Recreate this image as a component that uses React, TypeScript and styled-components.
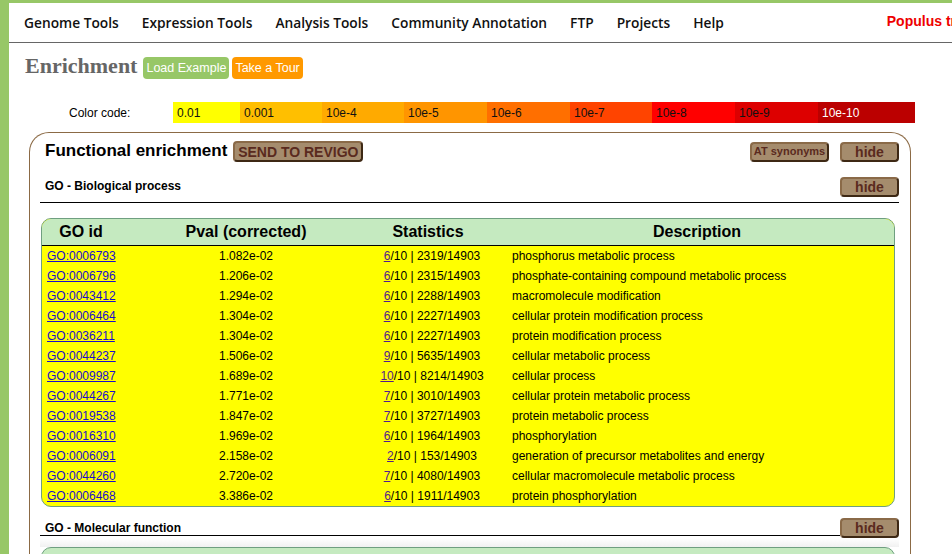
import React from "react";
import styled, { createGlobalStyle } from "styled-components";

const Global = createGlobalStyle`
  html, body { margin: 0; padding: 0; background: #fff; overflow: hidden; }
  body { font-family: "Liberation Sans", Arial, sans-serif; }
`;

const Page = styled.div`
  border-top: 3px solid #97c767;
  border-left: 9px solid #97c767;
  min-height: 600px;
  width: 1100px;
`;

const Nav = styled.nav`
  height: 39px;
  border-bottom: 1px solid #666;
  display: flex;
  align-items: center;
  padding-left: 15px;
  gap: 23px;
  white-space: nowrap;
  font-family: "Open Sans", sans-serif;
  font-weight: 600;
  font-size: 13.75px;
  color: #111;
`;

const NavItem = styled.span``;

const Species = styled.span`
  margin-left: 140px;
  color: #ee0000;
  font-family: "Liberation Sans", Arial, sans-serif;
  font-weight: bold;
  font-size: 14px;
  margin-top: -3px;
`;

const TitleRow = styled.div`
  display: flex;
  align-items: center;
  margin-top: 14px;
  padding-left: 16px;
  height: 22px;
`;

const PageTitle = styled.h1`
  margin: 0 6px 0 0;
  font-family: "Liberation Serif", Georgia, serif;
  font-weight: bold;
  font-size: 22px;
  color: #666;
  line-height: 22px;
  margin-top: -4px;
`;

const Pill = styled.span<{ $bg: string }>`
  background: ${(p) => p.$bg};
  color: #fff;
  font-size: 12.5px;
  height: 22px;
  line-height: 22px;
  padding: 0 3px;
  border-radius: 4px;
  margin-right: 3px;
`;

const ColorRow = styled.div`
  display: flex;
  margin-top: 23px;
  height: 21px;
  font-size: 12px;
  align-items: stretch;
`;

const ColorLabel = styled.div`
  width: 104px;
  margin-left: 60px;
  display: flex;
  align-items: center;
`;

const ColorCell = styled.div<{ $bg: string; $w: number; $light?: boolean }>`
  width: ${(p) => p.$w}px;
  background: ${(p) => p.$bg};
  color: ${(p) => (p.$light ? "#fff" : "#111")};
  padding-left: 4px;
  box-sizing: border-box;
  display: flex;
  align-items: center;
`;

const Panel = styled.section`
  margin: 9px 0 0 20px;
  width: 882px;
  box-sizing: border-box;
  border: 1px solid #8b6a45;
  border-bottom: none;
  border-radius: 20px 20px 0 0;
  padding: 8px 11px 0 10px;
  height: 460px;
`;

const PanelHead = styled.div`
  display: flex;
  align-items: center;
  padding-left: 5px;
  height: 21px;
`;

const PanelTitle = styled.h2`
  margin: -2px 6px 0 0;
  font-size: 17px;
  font-weight: bold;
  color: #000;
`;

const Spacer = styled.div`
  flex: 1;
`;

const BrownButton = styled.button<{ $w: number; $fs: number; $h?: number; $gap?: number }>`
  width: ${(p) => p.$w}px;
  height: ${(p) => p.$h ?? 20}px;
  box-sizing: border-box;
  background: #a58c6d;
  border: 2px solid;
  border-color: #8a6a48 #3d2814 #3d2814 #8a6a48;
  border-radius: 4px;
  color: #5a2a1e;
  font-family: "Liberation Sans", Arial, sans-serif;
  font-weight: bold;
  font-size: ${(p) => p.$fs}px;
  padding: 0;
  line-height: 1;
  margin-left: ${(p) => p.$gap ?? 0}px;
`;

const SectionHead = styled.div<{ $inline?: boolean }>`
  display: flex;
  align-items: center;
  margin-top: ${(p) => (p.$inline ? 11 : 15)}px;
  padding-bottom: ${(p) => (p.$inline ? 0 : 5)}px;
  border-bottom: ${(p) => (p.$inline ? "none" : "1px solid #000")};
`;

const SectionTitle = styled.div<{ $inline?: boolean }>`
  flex: 1;
  font-size: 12px;
  font-weight: bold;
  padding-left: 5px;
  padding-bottom: ${(p) => (p.$inline ? 0 : 0)}px;
  margin-top: ${(p) => (p.$inline ? 1 : -3)}px;
  border-bottom: ${(p) => (p.$inline ? "1px solid #000" : "none")};
`;

const Table = styled.div`
  margin: 15px 4px 0 1px;
  border: 1px solid #6f9f80;
  border-radius: 10px;
  overflow: hidden;
  background: #ffff00;
`;

const HeadRow = styled.div`
  display: grid;
  grid-template-columns: 78px 252px 112px 1fr;
  height: 26px;
  background: #c5eac0;
  border-bottom: 1px solid #000;
  align-items: center;
  font-size: 16px;
  font-weight: bold;
`;

const HeadCell = styled.div<{ $pad?: number }>`
  text-align: center;
  padding-left: ${(p) => p.$pad ?? 0}px;
`;

const Row = styled.div`
  display: grid;
  grid-template-columns: 78px 252px 112px 1fr;
  height: 20px;
  align-items: center;
  font-size: 12px;
  color: #000;
`;

const Cell = styled.div<{ $align?: string; $pad?: number }>`
  text-align: ${(p) => p.$align ?? "center"};
  padding-left: ${(p) => p.$pad ?? 0}px;
  white-space: nowrap;
`;

const GoLink = styled.a`
  color: #1a0dcc;
  text-decoration: underline;
`;

const CountLink = styled.a`
  color: #551a8b;
  text-decoration: underline;
`;

const Shade = styled.div`
  height: 9px;
  background: linear-gradient(#fff, #f1f1f1);
`;

const NextTable = styled.div`
  margin: 0 4px 0 1px;
  height: 40px;
  border: 1px solid #6f9f80;
  border-radius: 10px 10px 0 0;
  background: #c5eac0;
`;

const rows: [string, string, string, string, string][] = [
  ["GO:0006793", "1.082e-02", "6", "2319", "phosphorus metabolic process"],
  ["GO:0006796", "1.206e-02", "6", "2315", "phosphate-containing compound metabolic process"],
  ["GO:0043412", "1.294e-02", "6", "2288", "macromolecule modification"],
  ["GO:0006464", "1.304e-02", "6", "2227", "cellular protein modification process"],
  ["GO:0036211", "1.304e-02", "6", "2227", "protein modification process"],
  ["GO:0044237", "1.506e-02", "9", "5635", "cellular metabolic process"],
  ["GO:0009987", "1.689e-02", "10", "8214", "cellular process"],
  ["GO:0044267", "1.771e-02", "7", "3010", "cellular protein metabolic process"],
  ["GO:0019538", "1.847e-02", "7", "3727", "protein metabolic process"],
  ["GO:0016310", "1.969e-02", "6", "1964", "phosphorylation"],
  ["GO:0006091", "2.158e-02", "2", "153", "generation of precursor metabolites and energy"],
  ["GO:0044260", "2.720e-02", "7", "4080", "cellular macromolecule metabolic process"],
  ["GO:0006468", "3.386e-02", "6", "1911", "protein phosphorylation"],
];

const colors: [string, string, number, boolean?][] = [
  ["0.01", "#ffff00", 67],
  ["0.001", "#ffbf00", 82],
  ["10e-4", "#ffaa00", 82],
  ["10e-5", "#ff9500", 83],
  ["10e-6", "#ff6f00", 83],
  ["10e-7", "#ff4400", 82],
  ["10e-8", "#ff0000", 83],
  ["10e-9", "#dd0000", 83],
  ["10e-10", "#bb0000", 97, true],
];

const navItems = ["Genome Tools", "Expression Tools", "Analysis Tools", "Community Annotation", "FTP", "Projects", "Help"];

export default function App() {
  return (
    <>
      <Global />
      <Page>
        <Nav>
          {navItems.map((n) => (
            <NavItem key={n}>{n}</NavItem>
          ))}
          <Species>Populus trichocarpa</Species>
        </Nav>
        <TitleRow>
          <PageTitle>Enrichment</PageTitle>
          <Pill $bg="#97c767">Load Example</Pill>
          <Pill $bg="#ff9900">Take a Tour</Pill>
        </TitleRow>
        <ColorRow>
          <ColorLabel>Color code:</ColorLabel>
          {colors.map(([label, bg, w, light]) => (
            <ColorCell key={label} $bg={bg} $w={w} $light={light}>
              {label}
            </ColorCell>
          ))}
        </ColorRow>
        <Panel>
          <PanelHead>
            <PanelTitle>Functional enrichment</PanelTitle>
            <BrownButton $w={130} $fs={14} $h={21}>SEND TO REVIGO</BrownButton>
            <Spacer />
            <BrownButton $w={79} $fs={11}>AT synonyms</BrownButton>
            <BrownButton $w={59} $fs={14} $gap={11}>hide</BrownButton>
          </PanelHead>
          <SectionHead>
            <SectionTitle>GO - Biological process</SectionTitle>
            <BrownButton $w={59} $fs={14}>hide</BrownButton>
          </SectionHead>
          <Table>
            <HeadRow>
              <HeadCell>GO id</HeadCell>
              <HeadCell>Pval (corrected)</HeadCell>
              <HeadCell>Statistics</HeadCell>
              <HeadCell $pad={16}>Description</HeadCell>
            </HeadRow>
            {rows.map(([id, p, k, n, d]) => (
              <Row key={id}>
                <Cell $align="left" $pad={5}>
                  <GoLink href="#">{id}</GoLink>
                </Cell>
                <Cell>{p}</Cell>
                <Cell $pad={8}>
                  <CountLink href="#">{k}</CountLink>/10 | {n}/14903
                </Cell>
                <Cell $align="left" $pad={28}>{d}</Cell>
              </Row>
            ))}
          </Table>
          <SectionHead $inline>
            <SectionTitle $inline>GO - Molecular function</SectionTitle>
            <BrownButton $w={59} $fs={14}>hide</BrownButton>
          </SectionHead>
          <Shade />
          <NextTable />
        </Panel>
      </Page>
    </>
  );
}
